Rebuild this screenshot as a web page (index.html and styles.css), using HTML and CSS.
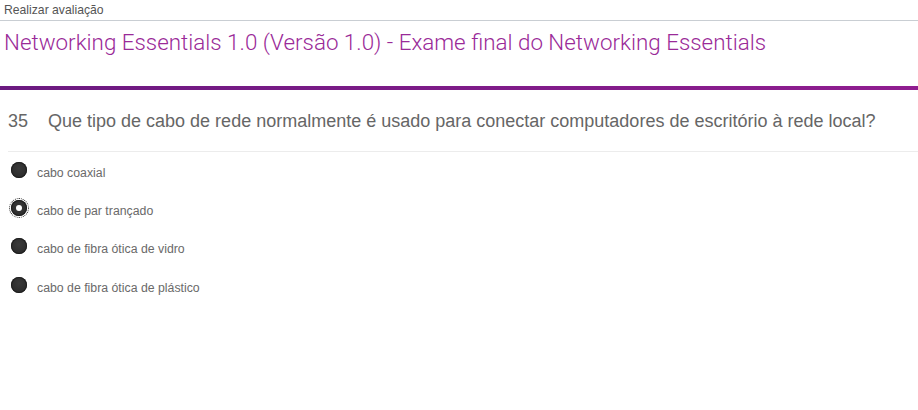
FILE: index.html
```html
<!DOCTYPE html>
<html lang="pt">
<head>
<meta charset="utf-8">
<link rel="stylesheet" href="styles.css">
</head>
<body>
<div class="crumb">Realizar avaliação</div>
<header class="head">
  <h1 class="title">Networking Essentials 1.0 (Versão 1.0) - Exame final do Networking Essentials</h1>
</header>
<div class="bar"></div>
<section class="question">
  <div class="qline"><span class="qnum">35</span><span class="qtext">Que tipo de cabo de rede normalmente é usado para conectar computadores de escritório à rede local?</span></div>
  <ul class="options">
    <li class="opt"><span class="radio"></span><span class="label">cabo coaxial</span></li>
    <li class="opt"><span class="radio checked"></span><span class="label">cabo de par trançado</span></li>
    <li class="opt"><span class="radio"></span><span class="label">cabo de fibra ótica de vidro</span></li>
    <li class="opt"><span class="radio"></span><span class="label">cabo de fibra ótica de plástico</span></li>
  </ul>
</section>
</body>
</html>
```

FILE: styles.css
```css
html, body { margin: 0; padding: 0; background: #fff; }
body { width: 918px; height: 410px; overflow: hidden; font-family: "Liberation Sans", Arial, sans-serif; }
.crumb {
  height: 21px;
  box-sizing: border-box;
  padding: 3px 0 0 4px;
  font-size: 12.2px;
  color: #555;
  border-bottom: 1px solid #c9ced3;
}
.head { height: 65px; box-sizing: border-box; padding: 6px 0 0 4px; }
.title {
  margin: 0;
  font-family: Roboto, "Liberation Sans", sans-serif;
  font-weight: 300;
  font-size: 22.38px;
  line-height: 30px;
  color: #9a2a98;
  white-space: nowrap;
}
.bar { height: 4px; background: linear-gradient(to right, #6b1a80, #901d90); }
.question { padding: 0 0 0 8px; }
.qline {
  display: flex;
  height: 62px;
  align-items: center;
  box-sizing: border-box;
  padding-top: 2px;
  border-bottom: 1px solid #ececec;
  font-size: 18px;
  color: #666;
  white-space: nowrap;
}
.qnum { width: 40px; }
.options { list-style: none; margin: 0; padding: 0 0 0 3px; }
.opt { display: flex; align-items: center; height: 38.3px; }
.radio {
  width: 16px; height: 16px; border-radius: 50%;
  background: radial-gradient(circle at 50% 40%, #3a3a3a, #262626);
  box-shadow: inset 0 0 0 1px #1e1e1e;
  position: relative;
  flex: none;
  margin-top: -3px;
}
.radio.checked { outline: 1px dotted #222; outline-offset: 1px; }
.radio.checked::after {
  content: ""; position: absolute; left: 5px; top: 5px; width: 6px; height: 6px;
  border-radius: 50%; background: #fff;
}
.label { margin-left: 10px; font-size: 12.3px; color: #6a6a6a; margin-top: 3px; }
```
